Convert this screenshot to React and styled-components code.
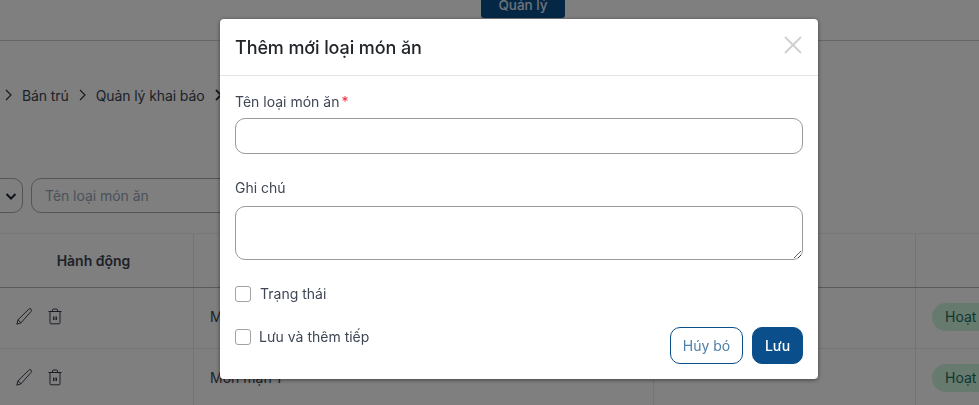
import styled, { createGlobalStyle } from 'styled-components';

const GlobalStyle = createGlobalStyle`
  html, body {
    margin: 0;
    height: 100%;
    overflow: hidden;
    background: #fff;
    font-family: Inter, "Noto Sans", sans-serif;
    font-size: 14px;
    color: #3b4452;
  }
  * { box-sizing: border-box; }
`;

const Page = styled.div`
  width: 979px;
  height: 405px;
  overflow: hidden;
`;

const TopBar = styled.div`
  height: 41px;
  border-bottom: 1px solid #cfcfcf;
  display: flex;
  padding-left: 481px;
`;

const NavTab = styled.div`
  width: 84px;
  height: 18px;
  background: #0a4f8c;
  color: #dbe6f0;
  border-radius: 0 0 3px 3px;
  font-weight: 500;
  font-size: 13.5px;
  line-height: 11px;
  text-align: center;
  overflow: hidden;
`;

const Breadcrumb = styled.nav`
  display: flex;
  align-items: center;
  height: 20px;
  margin-top: 44px;
  padding-left: 4px;
  font-size: 14px;
  letter-spacing: -0.1px;
  white-space: nowrap;
`;

const Crumb = styled.span`
  margin: 0 9px;
`;

const Filters = styled.div`
  display: flex;
  gap: 8px;
  margin-top: 73px;
  margin-left: -60px;
`;

const SelectBox = styled.div`
  width: 83px;
  height: 35px;
  border: 1px solid #a8a8a8;
  border-radius: 10px;
  display: flex;
  align-items: center;
  justify-content: flex-end;
  padding-right: 5px;
`;

const SearchBox = styled.div`
  width: 300px;
  height: 35px;
  border: 1px solid #a8a8a8;
  border-radius: 10px;
  padding-left: 13px;
  display: flex;
  align-items: center;
  color: #98a2b3;
  font-size: 14px;
  letter-spacing: -0.05px;
`;

const Table = styled.div`
  margin-top: 20px;
  margin-left: -6px;
  width: 1000px;
  border-top: 1px solid #eee;
`;

const Row = styled.div`
  display: grid;
  grid-template-columns: 200px 460px 262px 1fr;
  height: ${(p) => p.$height}px;
  border-bottom: 1px solid ${(p) => (p.$head ? '#b4b4b4' : '#e8e8e8')};
`;

const Cell = styled.div`
  display: flex;
  align-items: center;
  border-right: 1px solid #e8e8e8;
  padding-left: ${(p) => p.$pad || 0}px;
  justify-content: ${(p) => (p.$center ? 'center' : 'flex-start')};
  gap: 15px;
  font-weight: ${(p) => (p.$head ? 600 : 400)};
  font-size: 14px;
  padding-bottom: ${(p) => (p.$head ? 0 : 3)}px;
`;

const Badge = styled.span`
  display: inline-flex;
  align-items: center;
  height: 28px;
  padding: 0 13px;
  border-radius: 14px;
  background: #ccf5dc;
  color: #1f6f5f;
  font-size: 14px;
  white-space: nowrap;
`;

const Overlay = styled.div`
  position: fixed;
  inset: 0;
  background: rgba(0, 0, 0, 0.5);
  padding: 19px 0 0 220px;
`;

const Modal = styled.div`
  width: 598px;
  height: 360px;
  background: #fff;
  border-radius: 4px;
  box-shadow: 0 1px 4px rgba(0, 0, 0, 0.5);
  display: flex;
  flex-direction: column;
`;

const ModalHeader = styled.div`
  height: 57px;
  border-bottom: 1px solid #e5e5e5;
  padding: 0 16px 0 15px;
  display: flex;
  align-items: center;
  justify-content: space-between;
`;

const Title = styled.h2`
  margin: 0;
  font-size: 18px;
  font-weight: 500;
  letter-spacing: -0.1px;
  color: #212529;
`;

const CloseButton = styled.button`
  border: 0;
  background: none;
  padding: 0;
  width: 18px;
  height: 18px;
  margin-bottom: 4px;
  display: flex;
`;

const ModalBody = styled.form`
  padding: 17px 15px 0;
  display: flex;
  flex-direction: column;
  flex: 1;
`;

const Label = styled.label`
  display: block;
  font-size: 14px;
  line-height: 17px;
  color: #3f4654;
  margin-top: ${(p) => p.$top || 0}px;
  margin-bottom: ${(p) => p.$bottom}px;
`;

const Required = styled.span`
  color: #ef2b3a;
  margin-left: 2px;
`;

const TextInput = styled.input`
  display: block;
  width: 100%;
  height: 36px;
  border: 1px solid #9a9a9a;
  border-radius: 10px;
  outline: none;
`;

const TextArea = styled.textarea`
  display: block;
  width: 100%;
  height: 54px;
  border: 1px solid #9a9a9a;
  border-radius: 10px;
  outline: none;
  margin: 0;
`;

const CheckRow = styled.label`
  display: flex;
  align-items: center;
  gap: ${(p) => p.$gap}px;
  height: 16px;
  margin-top: ${(p) => p.$top}px;
  color: #3f4654;
  font-size: 14px;
`;

const CheckText = styled.span`
  margin-top: -2px;
`;

const Check = styled.input.attrs({ type: 'checkbox' })`
  appearance: none;
  width: 16px;
  height: 16px;
  margin: 0;
  border: 1px solid #a3a3a3;
  border-radius: 3px;
  background: #fff;
`;

const ModalFooter = styled.div`
  display: flex;
  justify-content: space-between;
  margin-top: 25px;
`;

const Button = styled.button`
  height: 37px;
  border-radius: 10px;
  font-family: inherit;
  font-size: 14px;
  border: 1px solid #0a4f8c;
  font-weight: ${(p) => (p.$primary ? 500 : 400)};
  background: ${(p) => (p.$primary ? '#0a4f8c' : '#fff')};
  color: ${(p) => (p.$primary ? '#fff' : '#4f7fab')};
  width: ${(p) => p.$width}px;
  padding: 0;
`;

const Actions = styled.div`
  display: flex;
  gap: 9px;
`;

const Chevron = ({ width = 1.2 }) => (
  <svg width="9" height="14" viewBox="0 0 9 14" fill="none" stroke="#2b3442" strokeWidth={width}>
    <path d="M2 2 7 7 2 12" />
  </svg>
);

const PencilIcon = () => (
  <svg width="17" height="17" viewBox="0 0 17 17" fill="none" stroke="#1f2937" strokeWidth="0.900">
    <path d="M.800 16.200 2 11.800 12.800 1.200a1.500 1.500 0 0 1 2.300 0 1.500 1.500 0 0 1 0 2.200L5 14.800Z" />
    <path d="M2 11.800 5 14.800" />
  </svg>
);

const TrashIcon = () => (
  <svg width="14" height="17" viewBox="0 0 14 17" fill="none" stroke="#1f2937" strokeWidth="0.900">
    <path d="M.500 3.500h13" />
    <path d="M4.500 3.500V2a1 1 0 0 1 1-1h3a1 1 0 0 1 1 1v1.500" />
    <path d="M2 3.500v11.300a1 1 0 0 0 1 1h8a1 1 0 0 0 1-1V3.500" />
    <path d="M5.800 8.500v3.500M8.200 8.500v3.500" strokeWidth="1.300" />
  </svg>
);

const rows = ['Món mặn 1', 'Món mặn 1'];

export default function App() {
  return (
    <>
      <GlobalStyle />
      <Page>
        <TopBar>
          <NavTab>Quản lý</NavTab>
        </TopBar>
        <Breadcrumb>
          <Chevron />
          <Crumb>Bán trú</Crumb>
          <Chevron />
          <Crumb>Quản lý khai báo</Crumb>
          <Chevron width={1.8} />
        </Breadcrumb>
        <Filters>
          <SelectBox>
            <svg width="12" height="12" viewBox="0 0 12 12" fill="none" stroke="#1f2937" strokeWidth="2">
              <path d="M1.500 4 6 8.500 10.500 4" />
            </svg>
          </SelectBox>
          <SearchBox>Tên loại món ăn</SearchBox>
        </Filters>
        <Table>
          <Row $head $height={54}>
            <Cell $head $center>Hành động</Cell>
            <Cell />
            <Cell />
            <Cell />
          </Row>
          {rows.map((name, i) => (
            <Row key={i} $height={61}>
              <Cell $pad={22}>
                <PencilIcon />
                <TrashIcon />
              </Cell>
              <Cell $pad={16}>{name}</Cell>
              <Cell />
              <Cell $pad={16}>
                <Badge>Hoạt động</Badge>
              </Cell>
            </Row>
          ))}
        </Table>
      </Page>
      <Overlay>
        <Modal>
          <ModalHeader>
            <Title>Thêm mới loại món ăn</Title>
            <CloseButton type="button" aria-label="Đóng">
              <svg width="18" height="18" viewBox="0 0 18 18" stroke="#cfcfcf" strokeWidth="1.800">
                <path d="M1 1l16 16M17 1 1 17" />
              </svg>
            </CloseButton>
          </ModalHeader>
          <ModalBody>
            <Label $bottom={8}>
              Tên loại món ăn<Required>*</Required>
            </Label>
            <TextInput />
            <Label $top={25} $bottom={10}>Ghi chú</Label>
            <TextArea />
            <CheckRow $gap={9} $top={26}>
              <Check />
              <CheckText>Trạng thái</CheckText>
            </CheckRow>
            <ModalFooter>
              <CheckRow $gap={8} $top={2}>
                <Check />
                <CheckText>Lưu và thêm tiếp</CheckText>
              </CheckRow>
              <Actions>
                <Button type="button" $width={73}>Húy bó</Button>
                <Button type="submit" $primary $width={51}>Lưu</Button>
              </Actions>
            </ModalFooter>
          </ModalBody>
        </Modal>
      </Overlay>
    </>
  );
}
